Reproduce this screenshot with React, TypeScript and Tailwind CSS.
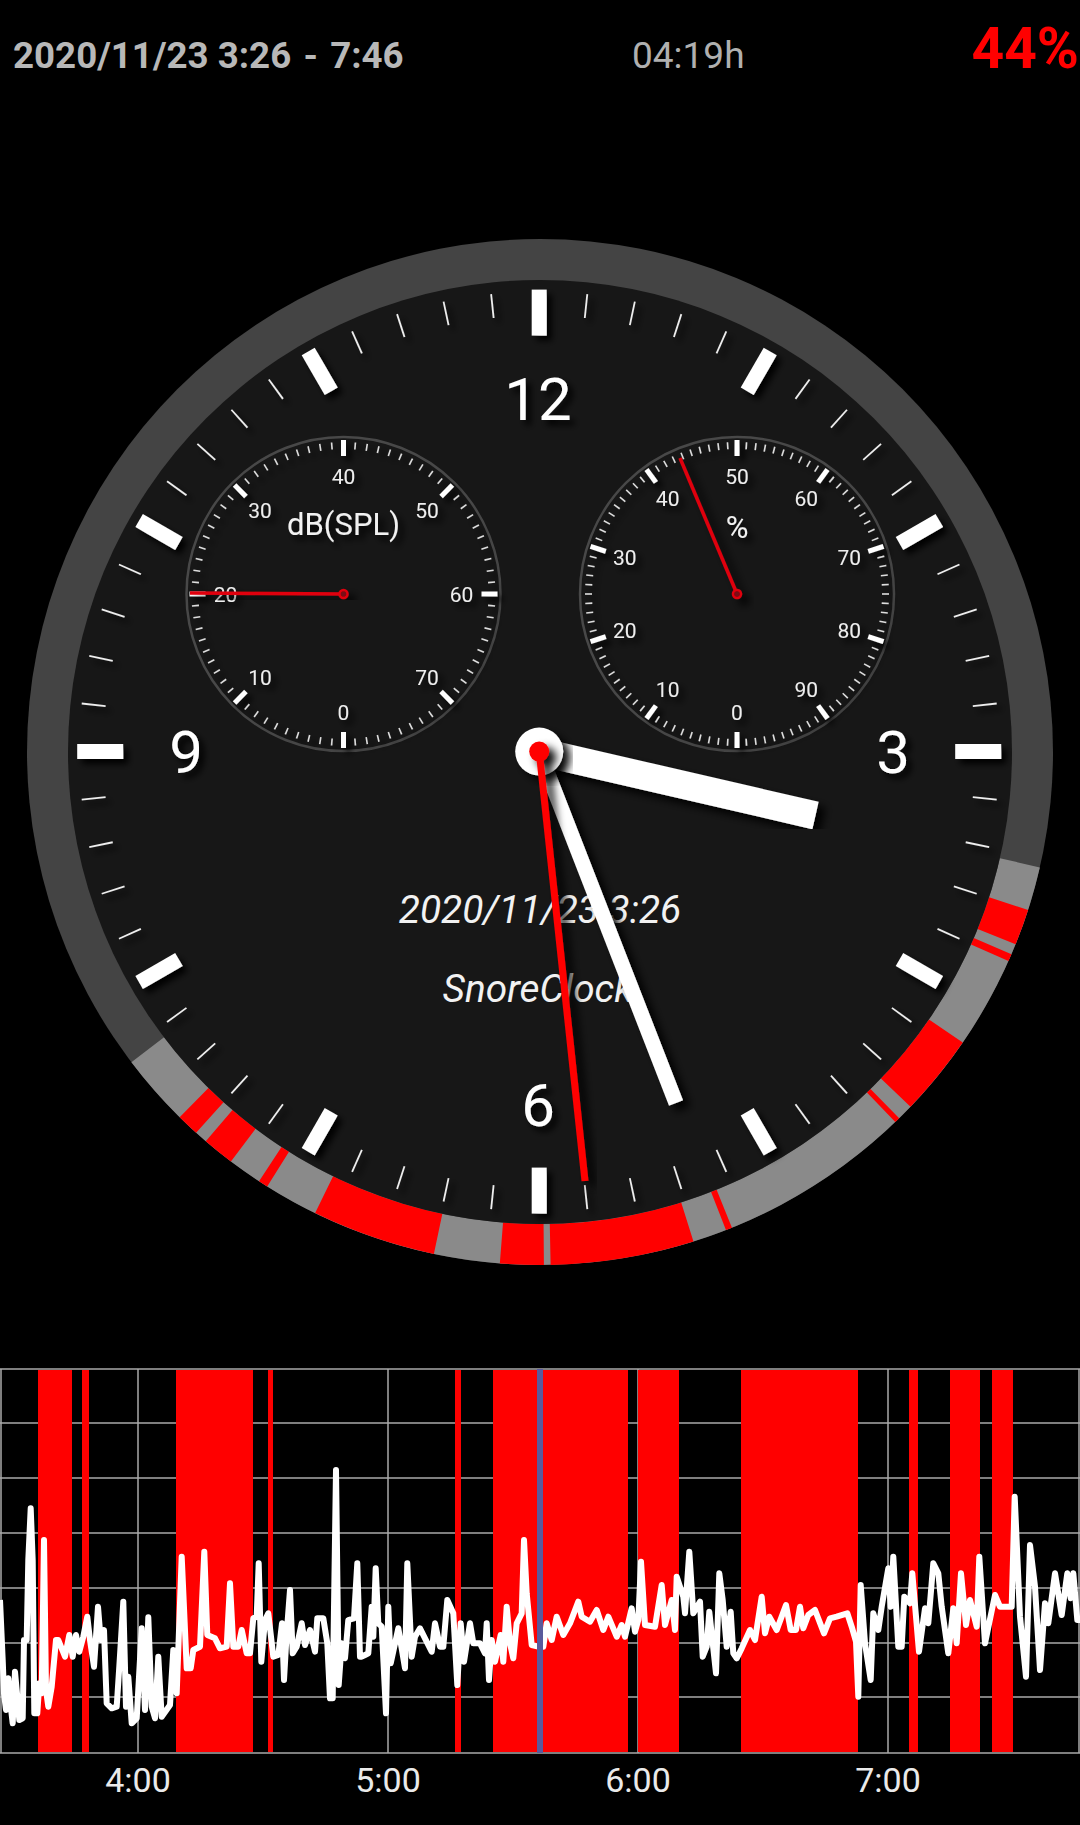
const CX = 540
const CY = 752
// the ticks and hands sit a touch off the bezel's centre
const HX = 539.2
const HY = 751.6

// red stretches of the night, as x positions on the chart
const BANDS: [number, number][] = [
  [38, 72], [82, 89], [176, 253], [268, 273], [455, 461], [493, 628],
  [638, 679], [741, 858], [909, 918], [950, 980], [992, 1013],
]

const GRID_Y = [1369, 1423, 1478, 1533, 1588, 1643, 1697, 1753]
const GRID_X = [1, 138, 388, 638, 888, 1079]
const HOURS = [
  { x: 138, label: '4:00' },
  { x: 388, label: '5:00' },
  { x: 638, label: '6:00' },
  { x: 888, label: '7:00' },
]

// traced by hand from the recording, one list per 360px of chart, scaled 3x
const TRACE_A = [0,720,8,900,12,1000,18,1050,25,955,30,1020,38,1090,45,935,52,1010,58,1080,68,1075,72,840,80,840,85,600,92,445,98,600,103,1060,112,1060,118,970,125,1000,132,540,138,990,145,1040,155,980,168,840,175,840,195,890,208,825,218,890,228,825,238,875,250,830,262,770,270,840,282,920,294,740,302,840,312,810,320,1030,335,1045,350,1040,358,920,370,725,378,1040,385,950,395,1090,410,1075,425,805,435,1050,445,772,455,1040,465,1075,475,890,485,1070,510,1035,520,870,530,1000,545,590,560,925,572,925,580,870,600,860,613,575,622,825,645,835,660,865,680,860,690,670,700,860,715,860,725,810,740,880,750,880,760,775,770,770,776,610,784,905,795,780,805,760,820,890,835,885,846,790,852,960,860,820,870,690,878,880,890,860,905,790,915,855,930,810,945,875,952,775,970,775,982,850,990,1015,998,1015,1008,330,1016,975,1025,850,1035,895,1045,780,1062,775,1072,610,1080,890]
const TRACE_B = [5,890,15,885,25,880,35,740,40,830,47,625,55,790,65,800,78,1060,85,740,92,910,115,805,135,925,142,610,155,890,165,830,180,805,195,835,215,875,225,790,240,860,250,860,262,720,280,760,292,975,302,790,312,905,330,790,340,850,360,850,375,880,380,790,387,960,395,840,405,905,422,825,430,905,440,740,450,850,460,895,470,790,485,760,492,540,500,700,515,855,535,860,550,860,560,790,575,840,590,770,610,825,630,790,655,725,665,770,690,785,710,750,730,810,745,770,770,830,785,795,795,830,815,745,825,815,835,780,843,605,855,795,885,800,905,675,915,795,935,720,945,810,950,650,970,710,975,760,988,575,1000,760,1020,725,1028,890,1040,860,1048,755,1068,940,1078,640]
const TRACE_C = [8,720,20,860,32,755,40,880,50,895,65,865,90,810,105,840,125,710,135,820,148,770,170,810,198,735,212,810,228,810,240,740,250,805,265,765,285,750,312,820,330,775,350,770,382,760,395,800,408,845,415,1010,422,675,435,850,452,960,460,760,475,810,485,740,505,625,512,740,520,590,535,860,545,860,553,710,570,730,577,640,597,875,615,745,625,790,640,610,655,640,665,740,685,880,700,745,710,850,723,640,738,795,750,720,770,800,778,590,795,850,825,705,840,740,875,740,884,410,900,770,918,950,930,555,945,680,960,930,975,730,985,790,1005,640,1025,765,1042,640,1052,715,1060,640,1072,780,1080,780]

function tracePoints() {
  const out: string[] = []
  const add = (list: number[], offset: number) => {
    for (let i = 0; i < list.length; i += 2) {
      out.push(`${(offset + list[i] / 3).toFixed(1)},${(1360 + list[i + 1] / 3).toFixed(1)}`)
    }
  }
  add(TRACE_A, 0)
  add(TRACE_B, 360)
  add(TRACE_C, 720)
  return out.join(' ')
}

// 3:26 sits at 103deg and 7:46 at 233deg on the dial
function bandAngle(x: number) {
  const deg = 103 + ((x + 3) / 1082) * 130
  return x > 630 ? deg - 0.45 : deg
}

function polar(cx: number, cy: number, r: number, deg: number) {
  const a = (deg * Math.PI) / 180
  return { x: cx + r * Math.sin(a), y: cy - r * Math.cos(a) }
}

function arc(r: number, from: number, to: number) {
  const a = polar(CX, CY, r, from)
  const b = polar(CX, CY, r, to)
  const large = to - from > 180 ? 1 : 0
  return `M${a.x} ${a.y}A${r} ${r} 0 ${large} 1 ${b.x} ${b.y}`
}

function Tick({ cx, cy, r1, r2, deg, width, color = '#fff' }: {
  cx: number; cy: number; r1: number; r2: number; deg: number; width: number; color?: string
}) {
  const a = polar(cx, cy, r1, deg)
  const b = polar(cx, cy, r2, deg)
  return <line x1={a.x} y1={a.y} x2={b.x} y2={b.y} stroke={color} strokeWidth={width} />
}

function SubDial({ cx, labels, title, needleTo, minor }: {
  cx: number; labels: number[]; title: string; needleTo: [number, number]; minor: number
}) {
  const cy = 594
  const step = 360 / labels.length
  const minorStep = step / minor
  const count = Math.round(360 / minorStep)
  return (
    <g>
      <circle cx={cx} cy={cy} r={157} fill="none" stroke="#484848" strokeWidth={2.5} />
      <g filter="url(#soft)">
        {Array.from({ length: count }, (_, i) =>
          i % minor === 0 ? (
            <Tick key={i} cx={cx} cy={cy} r1={138} r2={154} deg={i * minorStep} width={5} />
          ) : (
            <Tick key={i} cx={cx} cy={cy} r1={145} r2={152} deg={i * minorStep} width={1.6} color="#ddd" />
          ),
        )}
        {labels.map((label, i) => {
          const p = polar(cx, cy, 118, 180 + i * step)
          return (
            <text key={label} x={p.x} y={p.y + 7.5} fontSize={21} textAnchor="middle" fill="#eee">
              {label}
            </text>
          )
        })}
        <text x={cx} y={title === '%' ? 538 : 535} fontSize={31} textAnchor="middle" fill="#f2f2f2">
          {title}
        </text>
      </g>
      <g filter="url(#hand)">
        <line x1={cx} y1={cy} x2={needleTo[0]} y2={needleTo[1]} stroke="#e00010" strokeWidth={3.5} />
        <circle cx={cx} cy={cy} r={4} fill="#7a0a12" stroke="#e00010" strokeWidth={2.5} />
      </g>
    </g>
  )
}

function Clock() {
  return (
    <svg viewBox="0 220 1080 1060" className="block h-[1060px] w-[1080px]">
      <defs>
        <filter id="soft" x="-10%" y="-10%" width="120%" height="120%">
          <feDropShadow dx="5" dy="5" stdDeviation="3" floodColor="#000" floodOpacity="0.95" />
        </filter>
        <filter id="hand" x="-20%" y="-20%" width="140%" height="140%">
          <feDropShadow dx="7" dy="6" stdDeviation="4" floodColor="#000" floodOpacity="0.95" />
        </filter>
      </defs>

      {/* bezel and the recorded span on it */}
      <circle cx={CX} cy={CY} r={513} fill="#444444" />
      <path d={arc(492.5, 103, 232.8)} fill="none" stroke="#8a8a8a" strokeWidth={41} />
      {BANDS.map(([a, b]) => (
        <path key={a} d={arc(492.5, bandAngle(a), bandAngle(b))} fill="none" stroke="#ff0000" strokeWidth={41} />
      ))}
      <circle cx={CX} cy={CY} r={472} fill="#171717" />

      <g filter="url(#soft)">
        {Array.from({ length: 60 }, (_, i) =>
          i % 5 === 0 ? (
            <Tick key={i} cx={HX} cy={HY} r1={416} r2={462} deg={i * 6} width={15} />
          ) : (
            <Tick key={i} cx={HX} cy={HY} r1={436} r2={460} deg={i * 6} width={1.8} color="#eee" />
          ),
        )}
        <text x={538} y={420} fontSize={60} textAnchor="middle" fill="#fff">12</text>
        <text x={893} y={773} fontSize={60} textAnchor="middle" fill="#fff">3</text>
        <text x={538} y={1126} fontSize={60} textAnchor="middle" fill="#fff">6</text>
        <text x={186} y={773} fontSize={60} textAnchor="middle" fill="#fff">9</text>
      </g>

      <SubDial cx={343.5} labels={[0, 10, 20, 30, 40, 50, 60, 70]} title="dB(SPL)" needleTo={[190, 593]} minor={10} />
      <SubDial cx={737} labels={[0, 10, 20, 30, 40, 50, 60, 70, 80, 90]} title="%" needleTo={[680, 458]} minor={10} />

      <text x={540} y={923} fontSize={38.8} fontStyle="italic" textAnchor="middle" fill="#f2f2f2">
        2020/11/23 3:26
      </text>
      <text x={538} y={1002} fontSize={38.8} fontStyle="italic" textAnchor="middle" fill="#f2f2f2">
        SnoreClock
      </text>

      {/* hands */}
      <g filter="url(#hand)">
        <line x1={HX} y1={HY} x2={815.5} y2={815.5} stroke="#fff" strokeWidth={28} />
      </g>
      <g filter="url(#hand)">
        <line x1={HX} y1={HY} x2={676} y2={1103} stroke="#fff" strokeWidth={15} />
      </g>
      <g filter="url(#hand)">
        <circle cx={HX} cy={HY} r={24} fill="#fff" />
      </g>
      <g filter="url(#hand)">
        <line x1={HX} y1={HY} x2={585} y2={1181} stroke="#ff0000" strokeWidth={7} />
        <circle cx={HX} cy={HY} r={10} fill="#ff0000" />
      </g>
    </svg>
  )
}

function Chart() {
  return (
    <svg viewBox="0 1360 1080 465" className="block h-[465px] w-[1080px]">
      {GRID_Y.map((y) => (
        <line key={y} x1={0} y1={y} x2={1080} y2={y} stroke="#aaaaaa" strokeWidth={1.5} />
      ))}
      {GRID_X.map((x) => (
        <line key={x} x1={x} y1={1369} x2={x} y2={1753} stroke="#aaaaaa" strokeWidth={1.5} />
      ))}
      {BANDS.map(([a, b]) => (
        <rect key={a} x={a} y={1370} width={b - a} height={382} fill="#ff0000" />
      ))}
      <polyline points={tracePoints()} fill="none" stroke="#fff" strokeWidth={6} strokeLinejoin="round" />
      <rect x={537} y={1369} width={6} height={384} fill="#5a5a9c" />
      {HOURS.map((h) => (
        <text key={h.label} x={h.x} y={1792} fontSize={34} textAnchor="middle" fill="#eaeaea">
          {h.label}
        </text>
      ))}
    </svg>
  )
}

export default function App() {
  return (
    <div className="flex h-[1825px] w-[1080px] flex-col overflow-hidden bg-black [font-family:Roboto,sans-serif]">
      <div className="flex h-[220px] items-baseline pt-[6px] pr-[1px] pl-[13px]">
        <span className="w-[619px] text-[36.7px] font-bold whitespace-pre text-[#b8b8b8]">
          2020/11/23 3:26<span className="[word-spacing:-3px]">  -  </span>7:46
        </span>
        <span className="text-[37px] text-[#b0b0b0]">04:19h</span>
        <span className="ml-auto text-[57px] font-bold text-[#ff0000]">44%</span>
      </div>
      <Clock />
      <div className="h-[80px]" />
      <Chart />
    </div>
  )
}
